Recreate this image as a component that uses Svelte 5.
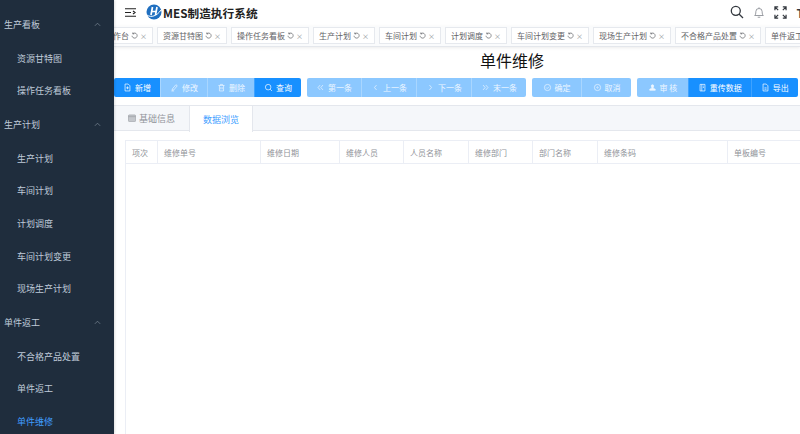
<script>
    const menu = [
        { title: '生产看板', items: ['资源甘特图', '操作任务看板'] },
        { title: '生产计划', items: ['生产计划', '车间计划', '计划调度', '车间计划变更', '现场生产计划'] },
        { title: '单件返工', items: ['不合格产品处置', '单件返工', '单件维修'] }
    ];
    const activeItem = '单件维修';

    const tabs = ['操作台', '资源甘特图', '操作任务看板', '生产计划', '车间计划', '计划调度', '车间计划变更', '现场生产计划', '不合格产品处置', '单件返工'];

    const icons = {
        add: 'M3 1.500h4.500L10 4v7.500H3zM6.500 5v4M4.500 7h4',
        edit: 'M2 11.500h4M3.500 8.500L8.500 2.500l2 1.500-5 6-2.500.5z',
        del: 'M2 3.500h9M5 3.500V2h3v1.500M3.500 3.500v8h6v-8M5.500 6v3M7.500 6v3',
        search: 'M6 2a4 4 0 1 0 0 8a4 4 0 0 0 0-8zM9 9l2.500 2.500',
        first: 'M6 3L3 6.500L6 10M10 3L7 6.500L10 10',
        prev: 'M8 3L5 6.500L8 10',
        next: 'M5 3L8 6.500L5 10',
        last: 'M3 3L6 6.500L3 10M7 3L10 6.500L7 10',
        ok: 'M6.500 2a4.500 4.500 0 1 0 0 9a4.500 4.500 0 0 0 0-9zM4.500 6.500l1.500 1.500l2.500-2.500',
        cancel: 'M6.500 2a4.500 4.500 0 1 0 0 9a4.500 4.500 0 0 0 0-9zM6.500 5.500a1 1 0 1 0 0 2a1 1 0 0 0 0-2z',
        audit: 'M6.500 2.500a1.800 1.800 0 1 0 0 3.600a1.800 1.800 0 0 0 0-3.600zM5.500 6v1.500L2.500 9v1.500h8V9l-3-1.500V6z',
        upload: 'M3 2h7v9.500H3zM5.500 2v9.500M7 4.500h1.500M7 6.500h1.500',
        export: 'M3 1.500h4.500L10 4v7.500H3zM5 7h3M5 9h3'
    };

    const toolbar = [
        [
            { label: '新增', icon: 'add', on: true },
            { label: '修改', icon: 'edit' },
            { label: '删除', icon: 'del' },
            { label: '查询', icon: 'search', on: true }
        ],
        [
            { label: '第一条', icon: 'first' },
            { label: '上一条', icon: 'prev' },
            { label: '下一条', icon: 'next' },
            { label: '末一条', icon: 'last' }
        ],
        [
            { label: '确定', icon: 'ok', wide: true },
            { label: '取消', icon: 'cancel', wide: true }
        ],
        [
            { label: '审 核', icon: 'audit', fill: true },
            { label: '重传数据', icon: 'upload', on: true },
            { label: '导出', icon: 'export', on: true }
        ]
    ];

    const columns = [
        { name: '项次', w: 32 },
        { name: '维修单号', w: 103 },
        { name: '维修日期', w: 79 },
        { name: '维修人员', w: 64 },
        { name: '人员名称', w: 65 },
        { name: '维修部门', w: 64 },
        { name: '部门名称', w: 65 },
        { name: '维修条码', w: 130 },
        { name: '单板编号', w: 130 }
    ];
</script>

<div class="app">
    <aside class="sidebar">
        {#each menu as group}
            <div class="group-title">
                <span>{group.title}</span>
                <svg class="chevron" viewBox="0 0 8 5" width="7" height="5"><path d="M1 4l3-3l3 3" /></svg>
            </div>
            {#each group.items as item}
                <div class="menu-item" class:active={item === activeItem}>{item}</div>
            {/each}
        {/each}
    </aside>

    <main class="main">
        <header class="topbar">
            <svg class="hamburger" viewBox="0 0 11 9" width="11" height="9">
                <path d="M0 .75h11M0 4.500h6M0 8.250h11M8 3l2 1.500L8 6" />
            </svg>
            <svg class="logo" viewBox="0 0 16 16" width="16" height="16">
                <circle cx="8" cy="8" r="7.500" fill="#1f6fc0" />
                <path d="M1 11C5 14 11 12 15 6" stroke="#fff" stroke-width="1" fill="none" />
                <path d="M6.500 3L5 11M11 3L9.500 11M5.500 7.500h5" stroke="#fff" stroke-width="1.700" fill="none" />
            </svg>
            <span class="brand">MES制造执行系统</span>
            <div class="top-icons">
                <svg viewBox="0 0 14 14" width="14" height="14" class="dark">
                    <circle cx="5.800" cy="5.800" r="4.500" />
                    <path d="M9 9l4 4" />
                </svg>
                <svg viewBox="0 0 14 14" width="12" height="13" class="grey">
                    <path d="M2 10.500c1-1 1.300-2 1.300-4.500a3.700 3.700 0 0 1 7.400 0c0 2.500.3 3.500 1.300 4.500zM5.500 12.500h3M7 1v1" />
                </svg>
                <svg viewBox="0 0 14 14" width="13" height="13" class="dark">
                    <path d="M1 4.500V1h3.500M1 1l3.500 3.500M13 4.500V1H9.500M13 1L9.500 4.500M1 9.500V13h3.500M1 13l3.500-3.500M13 9.500V13H9.500M13 13L9.500 9.500" />
                </svg>
                <span class="font-size">T</span>
            </div>
        </header>

        <nav class="tagsbar">
            <div class="tags">
                {#each tabs as tab}
                    <div class="tag">
                        <span>{tab}</span>
                        <svg viewBox="0 0 8 8" width="7" height="7"><path d="M1.200 4.300a2.900 2.900 0 1 0 1-2.400M2 .6v1.600h1.600" /></svg>
                        <span class="close">×</span>
                    </div>
                {/each}
            </div>
        </nav>

        <h1 class="title">单件维修</h1>

        <div class="toolbar">
            {#each toolbar as btnGroup}
                <div class="btn-group">
                    {#each btnGroup as btn}
                        <button class="btn" class:on={btn.on} class:wide={btn.wide} class:fill={btn.fill}>
                            <svg viewBox="0 0 13 13" width="9" height="9"><path d={icons[btn.icon]} /></svg>
                            <span>{btn.label}</span>
                        </button>
                    {/each}
                </div>
            {/each}
        </div>

        <div class="tabs">
            <div class="tab">
                <svg viewBox="0 0 9 9" width="8" height="8">
                    <rect x=".5" y="1" width="8" height="7.500" rx="1" fill="#c4c7cc" stroke="#909399" stroke-width=".6" />
                    <path d="M.5 3h8" stroke="#909399" stroke-width=".6" />
                </svg>
                基础信息
            </div>
            <div class="tab current">数据浏览</div>
        </div>

        <div class="table">
            <div class="thead">
                {#each columns as col}
                    <div class="th" style="width: {col.w}px">{col.name}</div>
                {/each}
            </div>
        </div>
    </main>
</div>

<style>
    :global(body) {
        margin: 0;
        background: #fff;
    }

    .app {
        display: flex;
        width: 800px;
        height: 434px;
        overflow: hidden;
        font-family: "Noto Sans CJK SC", "Liberation Sans", sans-serif;
    }

    .sidebar {
        flex: none;
        width: 114px;
        height: 434px;
        padding-top: 7px;
        box-sizing: border-box;
        overflow: hidden;
        background: #1f2d3d;
        color: #bfcbd9;
        box-shadow: 1px 0 2px rgba(0, 0, 0, 0.12);
        position: relative;
        z-index: 1;
    }

    .group-title {
        display: flex;
        align-items: center;
        justify-content: space-between;
        height: 34.700px;
        padding: 0 13px 0 4px;
        font-size: 9px;
    }

    .chevron path {
        fill: none;
        stroke: #7f8c9b;
        stroke-width: 0.8;
    }

    .menu-item {
        display: flex;
        align-items: center;
        height: 32.700px;
        padding-left: 17px;
        font-size: 9px;
    }

    .menu-item.active {
        color: #409eff;
    }

    .main {
        flex: 1;
        min-width: 0;
        height: 434px;
        overflow: hidden;
    }

    .topbar {
        display: flex;
        align-items: center;
        height: 26px;
        padding: 0 0 2px 11px;
        box-sizing: border-box;
    }

    .hamburger path {
        fill: none;
        stroke: #222;
        stroke-width: 1.200;
    }

    .logo {
        margin-left: 10px;
    }

    .brand {
        margin-left: 1px;
        font-size: 11.700px;
        font-weight: 700;
        color: #222;
    }

    .top-icons {
        display: flex;
        align-items: center;
        gap: 9px;
        margin-left: auto;
        margin-right: -4px;
    }

    .top-icons svg {
        fill: none;
        stroke-width: 1.300;
    }

    .top-icons .dark {
        stroke: #33383f;
    }

    .top-icons .grey {
        stroke: #7b8087;
        stroke-width: 0.900;
    }

    .font-size {
        font-size: 12px;
        font-weight: 700;
        color: #33383f;
    }

    .tagsbar {
        height: 20px;
        overflow: hidden;
        background: #fafbfc;
        border-bottom: 1px solid #e4e7ec;
        box-shadow: 0 1px 3px rgba(0, 0, 0, 0.08);
    }

    .tags {
        display: flex;
        gap: 4px;
        height: 17px;
        margin-left: -15px;
        padding-top: 1px;
    }

    .tag {
        flex: none;
        display: flex;
        align-items: center;
        gap: 2px;
        height: 15px;
        padding: 0 5px;
        background: #fff;
        border: 1px solid #e6e9ee;
        font-size: 8px;
        color: #5f6266;
    }

    .tag svg {
        fill: none;
        stroke: #5f6266;
        stroke-width: 0.800;
    }

    .close {
        font-size: 7px;
        color: #8b8f95;
    }

    .title {
        width: 796px;
        height: 31px;
        margin: 0;
        font-size: 16px;
        font-weight: 400;
        line-height: 26px;
        text-align: center;
        color: #111;
    }

    .toolbar {
        display: flex;
        gap: 6px;
        height: 19px;
        white-space: nowrap;
    }

    .btn-group {
        display: flex;
        flex: none;
        border-radius: 2px;
        overflow: hidden;
    }

    .btn {
        display: flex;
        align-items: center;
        justify-content: center;
        gap: 3px;
        height: 19px;
        padding: 0 9px;
        background: #8cc8ff;
        border: 0;
        border-left: 1px solid #a9d6ff;
        font-family: inherit;
        font-size: 8px;
        color: #eef7ff;
    }

    .btn:first-child {
        border-left: 0;
    }

    .btn.on {
        background: #1890ff;
        color: #fff;
        border-left-color: #3ea2ff;
    }

    .btn.wide {
        padding: 0 10.500px;
    }

    .btn.fill {
        padding: 0 10.500px;
    }

    .btn svg {
        fill: none;
        stroke: currentColor;
        stroke-width: 1;
    }

    .btn.fill svg {
        fill: currentColor;
    }

    .tabs {
        display: flex;
        height: 26px;
        margin-top: 8px;
        background: #f5f7fa;
        border-top: 1px solid #e4e7ed;
        border-bottom: 1px solid #e4e7ed;
        box-sizing: border-box;
    }

    .tab {
        display: flex;
        align-items: center;
        gap: 3px;
        padding: 0 14px;
        font-size: 9px;
        color: #909399;
        border-right: 1px solid transparent;
    }

    .tab.current {
        height: 26px;
        padding: 0 13px;
        margin-left: -1px;
        background: #fff;
        color: #409eff;
        border-left: 1px solid #e4e7ed;
        border-right: 1px solid #e4e7ed;
    }

    .table {
        height: 300px;
        margin: 9px 0 0 11px;
        border-left: 1px solid #ebeef5;
    }

    .thead {
        display: flex;
        height: 24px;
        border-top: 1px solid #ebeef5;
        border-bottom: 1px solid #ebeef5;
        box-sizing: border-box;
    }

    .th {
        flex: none;
        display: flex;
        align-items: center;
        padding-left: 6px;
        box-sizing: border-box;
        border-right: 1px solid #ebeef5;
        font-size: 8px;
        color: #909399;
    }
</style>
